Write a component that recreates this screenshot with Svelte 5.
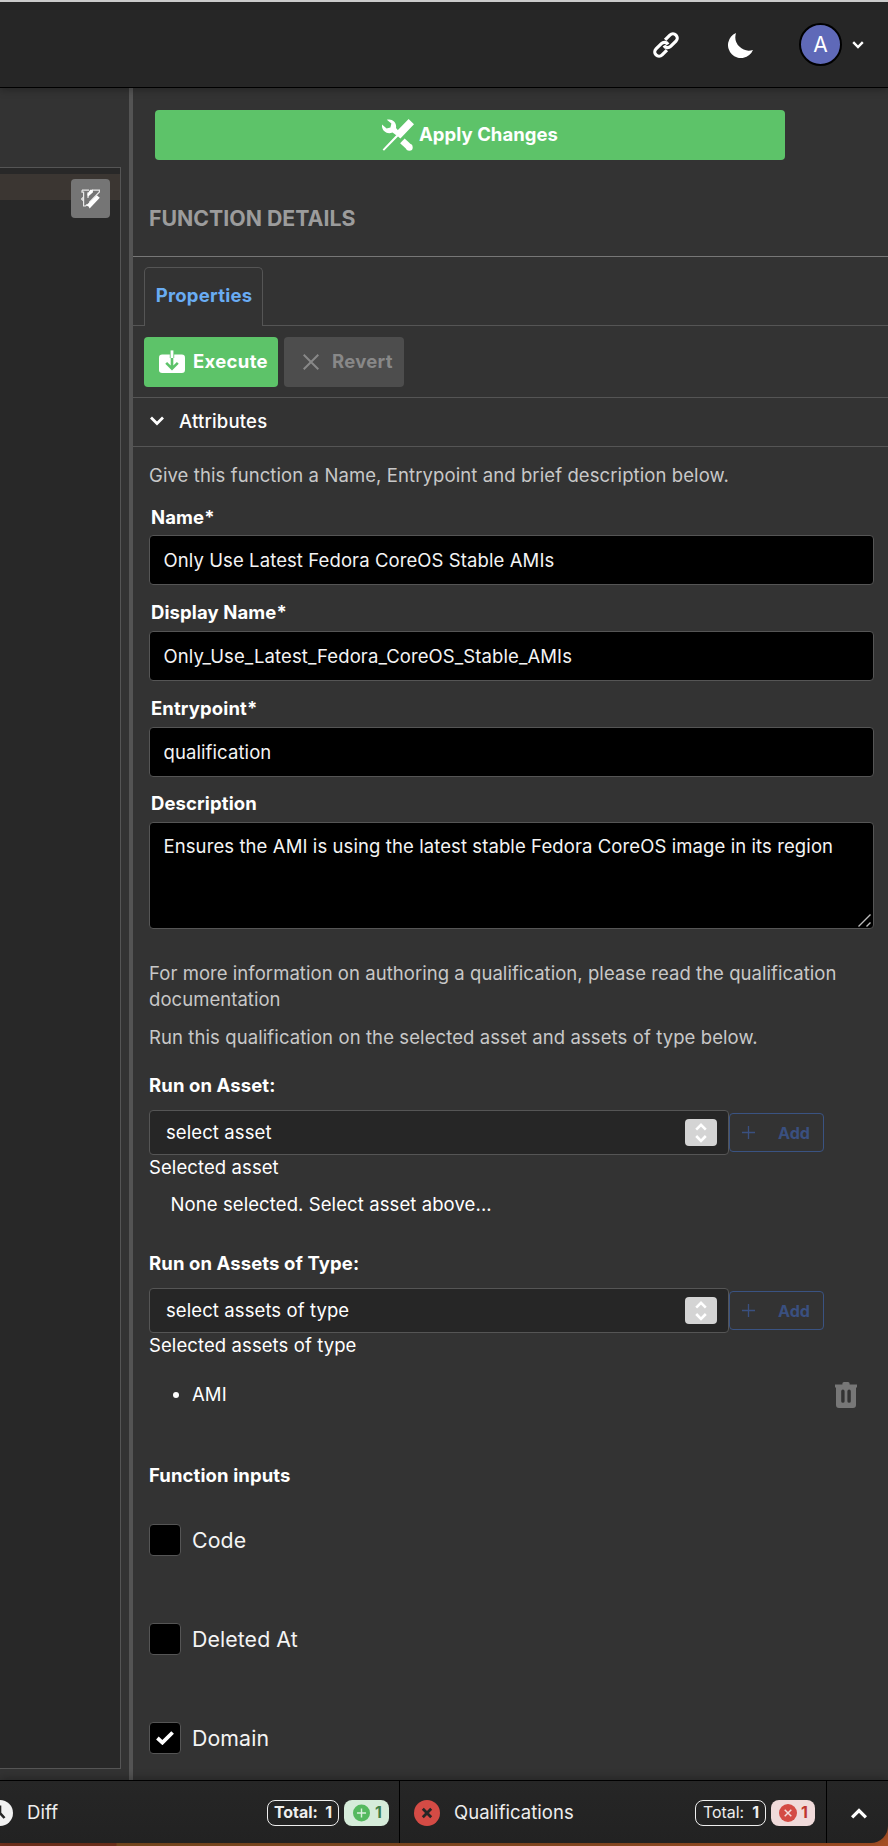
<script>
  const fields = [
    { label: 'Name*', value: 'Only Use Latest Fedora CoreOS Stable AMIs' },
    { label: 'Display Name*', value: 'Only_Use_Latest_Fedora_CoreOS_Stable_AMIs' },
    { label: 'Entrypoint*', value: 'qualification' }
  ];
  const description = 'Ensures the AMI is using the latest stable Fedora CoreOS image in its region';
  const inputs = [
    { label: 'Code', checked: false },
    { label: 'Deleted At', checked: false },
    { label: 'Domain', checked: true }
  ];
</script>

{#snippet picker(placeholder)}
  <div class="picker">
    <div class="select">
      <span>{placeholder}</span>
      <span class="stepper">
        <svg width="32" height="27" viewBox="0 0 32 27" fill="none" stroke="#fff" stroke-width="2.6"><path d="M11.2 10.6 16 5.8l4.8 4.8M11.2 17 16 21.8l4.8-4.8" /></svg>
      </span>
    </div>
    <button class="add">
      <svg width="13" height="13" viewBox="0 0 13 13" stroke="currentColor" stroke-width="1.3"><path d="M6.5 0v13M0 6.5h13" /></svg>
      Add
    </button>
  </div>
{/snippet}

<div class="app">
  <header>
    <svg class="link" width="26" height="26" viewBox="0 0 26 26" fill="none" stroke="#fff" stroke-width="3.2">
      <g transform="translate(13 13) rotate(-45)">
        <path d="M3 -4.3H9.8A4.3 4.3 0 0 1 9.8 4.3H2.2A4.3 4.3 0 0 1 -1.9 -1" />
        <path d="M-3 4.3H-9.8A4.3 4.3 0 0 1 -9.8 -4.3H-2.2A4.3 4.3 0 0 1 1.9 1" />
      </g>
    </svg>
    <svg class="moon" width="25" height="25" viewBox="0 0 25 25" fill="#fff"><path d="M8 0A13.6 13.6 0 0 0 25 17A13 13 0 1 1 8 0Z" /></svg>
    <span class="avatar">A</span>
    <svg width="12" height="8" viewBox="0 0 12 8" fill="none" stroke="#fff" stroke-width="2.4"><path d="M1.2 1.2 6 6l4.8-4.8" /></svg>
  </header>

  <main>
    <section class="left">
      <div class="editor">
        <div class="active-line"></div>
        <button class="vim" aria-label="Vim mode">
          <svg width="19" height="20" viewBox="0 0 19 20">
            <path d="M1 1.2H8M1 1.2V3.2H2.6V17H4.6L6 15.4M11 1.2H18.4V3L8.2 13.4M7 3.2V9M2.4 8.2.6 10l1.8 1.8" fill="none" stroke="#e8e8e8" stroke-width="1.2" />
            <path d="M9.2.8 11.8.8 12 3.2 7 7.8 6.4 5Z" fill="#fff" />
            <path d="M15.8 6.2 18.8 8.8 8.6 19.4 7.6 17.6 5 16.4Z" fill="#fff" />
          </svg>
        </button>
      </div>
    </section>

    <section class="panel">
      <button class="apply">
        <svg width="32" height="32" viewBox="0 0 32 32" fill="#fff">
          <path d="M4.8 .8C10-.8 15 3.2 14 9L17 12.5 14 16 10.5 13.5C5 16-.8 11.8 0 5.6L4.6 9.4 8.4 8.4 9.4 4.6Z" />
          <path d="M26.6 0 32 5.2 18.4 19.6 16 17.6 2 31.8.6 30.6 14.4 16 12.8 14.2Z" />
          <path d="M20.4 21.8 27.4 28.4" stroke="#fff" stroke-width="6.6" /><circle cx="27.4" cy="28.4" r="3.3" />
        </svg>
        <span>Apply Changes</span>
      </button>
      <h1>FUNCTION DETAILS</h1>
      <div class="tabs"><span class="tab">Properties</span></div>
      <div class="actions">
        <button class="execute">
          <svg width="26" height="24" viewBox="0 0 26 24">
            <rect y="4.6" width="26" height="18.4" rx="3.2" fill="#fff" />
            <path d="M13 3V18M7.2 12.8 13 18.6l5.8-5.8" fill="none" stroke="#5dc369" stroke-width="2.6" />
            <path d="M10.8 3.5h4.4V8h-4.4z" fill="#5dc369" />
            <path d="M11.6.4h2.8V8h-2.8z" fill="#fff" />
          </svg>
          <span>Execute</span>
        </button>
        <button class="revert">
          <svg width="16" height="16" viewBox="0 0 16 16" stroke="currentColor" stroke-width="2"><path d="M.7.7 15.3 15.3M15.3.7.7 15.3" /></svg>
          <span>Revert</span>
        </button>
      </div>
      <div class="accordion">
        <svg width="14" height="10" viewBox="0 0 14 10" fill="none" stroke="#fff" stroke-width="2.8"><path d="M1 1.6 7 7.6l6-6" /></svg>
        Attributes
      </div>

      <div class="form">
        <p class="muted">Give this function a Name, Entrypoint and brief description below.</p>
        <div class="fields">
          {#each fields as f}
            <label><span>{f.label}</span><input value={f.value} /></label>
          {/each}
          <label class="area">
            <span>Description</span>
            <textarea value={description}></textarea>
            <svg class="grip" width="13" height="13" viewBox="0 0 13 13" stroke="#bdbdbd" stroke-width="1.4"><path d="M.5 12.5 12.5.5M8.5 12.5l4-4" /></svg>
          </label>
        </div>

        <p class="muted docs">For more information on authoring a qualification, please read the qualification documentation</p>
        <p class="muted run">Run this qualification on the selected asset and assets of type below.</p>

        <h2 class="asset-title">Run on Asset:</h2>
        {@render picker('select asset')}
        <p class="caption">Selected asset</p>
        <p class="none">None selected. Select asset above...</p>

        <h2 class="type-title">Run on Assets of Type:</h2>
        {@render picker('select assets of type')}
        <p class="caption">Selected assets of type</p>
        <div class="item">
          <span class="dot"></span>
          <span>AMI</span>
          <svg width="22" height="26" viewBox="0 0 22 26"><path fill="#777" fill-rule="evenodd" d="M7.4 2.6V1.6Q7.4 0 9 0h4q1.6 0 1.6 1.6v1H22v3h-1V23q0 3-3 3H4q-3 0-3-3V5.6H0v-3ZM6.2 9.2v10q0 1.6 1.7 1.6t1.7-1.6v-10q0-1.6-1.7-1.6T6.2 9.2Zm6.2 0v10q0 1.6 1.7 1.6t1.7-1.6v-10q0-1.6-1.7-1.6t-1.7 1.6Z" /></svg>
        </div>

        <h2 class="inputs-title">Function inputs</h2>
        <div class="checks">
          {#each inputs as i}
            <div class="check">
              <span class="box">
                {#if i.checked}<svg width="18" height="14" viewBox="0 0 18 14" fill="none" stroke="#fff" stroke-width="3.8"><path d="M1.4 7 6.4 11.6 16.6 1.5" /></svg>{/if}
              </span>
              {i.label}
            </div>
          {/each}
        </div>
      </div>
    </section>
  </main>

  <footer>
    <div class="cell diff">
      <svg class="clock" width="26" height="26" viewBox="0 0 26 26"><circle cx="13" cy="13" r="13" fill="#f2f2f2" /><path d="M13 5.5V13l4.5 5" fill="none" stroke="#262626" stroke-width="2.6" /></svg>
      <span class="name">Diff</span>
      <span class="pill total"><b>Total:</b><b>1</b></span>
      <span class="pill green">
        <svg width="17" height="18" viewBox="0 0 18 18"><circle cx="9" cy="9" r="9" fill="#55b95f" /><path d="M9 4.2v9.6M4.2 9h9.6" stroke="#d9efdc" stroke-width="1.5" /></svg>
        <b>1</b>
      </span>
    </div>
    <div class="cell quals">
      <svg width="26" height="26" viewBox="0 0 26 26"><circle cx="13" cy="13" r="13" fill="#d44b45" /><path d="m8.8 8.8 8.4 8.4m0-8.4-8.4 8.4" stroke="#262626" stroke-width="2.8" /></svg>
      <span class="name">Qualifications</span>
      <span class="pill total"><span>Total:</span><b>1</b></span>
      <span class="pill red">
        <svg width="18" height="18" viewBox="0 0 18 18"><circle cx="9" cy="9" r="9" fill="#d44b45" /><path d="m5.7 5.7 6.6 6.6m0-6.6-6.6 6.6" stroke="#f3dcdc" stroke-width="1.5" /></svg>
        <b>1</b>
      </span>
    </div>
    <div class="cell up">
      <svg width="16" height="11" viewBox="0 0 16 11" fill="none" stroke="#fff" stroke-width="3.2"><path d="M1.1 9.4 8 2.5l6.9 6.9" /></svg>
    </div>
  </footer>
</div>

<style>
  :global(body) { background: #333; }
  * { box-sizing: border-box; }
  .app {
    width: 888px; height: 1846px; padding-bottom: 3px; overflow: hidden;
    display: flex; flex-direction: column;
    background: linear-gradient(90deg, #70301c 0 116px, #79491f 117px, #8a4a22 600px, #a64f24);
    color: #fff; font: 400 18.5px/26px Inter, sans-serif; letter-spacing: 0.095px;
  }
  p, h1, h2 { margin: 0; }
  button { border: 0; padding: 0; font: inherit; letter-spacing: inherit; color: #fff; display: flex; align-items: center; }
  svg { flex: none; display: block; }

  header {
    flex: none; height: 88px; border-top: 2px solid #cbcbcb; border-bottom: 1px solid #000; background: #262626;
    display: flex; align-items: center; justify-content: flex-end; padding-right: 24px;
    position: relative; box-shadow: 0 2px 8px rgba(0, 0, 0, 0.28);
  }
  .link { margin-right: 49px; }
  .moon { margin: 2px 46px 0 0; }
  .avatar {
    width: 43px; height: 43px; margin-right: 10px; border: 2px solid #000; border-radius: 50%; background: #5f69b8;
    display: flex; align-items: center; justify-content: center; font-size: 21px; letter-spacing: 0;
  }

  main { flex: 1; min-height: 0; display: flex; background: #333; }
  .left { width: 129px; padding: 79px 8px 11px 0; }
  .editor { height: 100%; border: 1px solid #555; border-left: 0; background: #282828; padding-top: 6px; display: flex; flex-direction: column; }
  .active-line { height: 26px; background: #3b3632; }
  .vim { margin: -21px 10px 0 auto; width: 39px; height: 39px; border-radius: 4px; background: #757575; justify-content: center; }
  .panel { flex: 1; border-left: 4px solid #545454; }

  .apply {
    margin: 22px 0 0 22px; width: 630px; height: 50px; border-radius: 4px; background: #5dc369;
    justify-content: center; gap: 5px; font-weight: 700; letter-spacing: 0.05px;
  }
  button span { margin-bottom: 2px; }
  h1 {
    height: 97px; padding: 45px 0 0 16px; border-bottom: 1px solid #777;
    font-size: 21.3px; font-weight: 700; letter-spacing: 0; line-height: 26px; color: #9c9c9c;
  }
  .tabs { height: 69px; padding: 10px 0 0 11px; border-bottom: 1px solid #555; display: flex; }
  .tab {
    height: 59px; width: 119px; border: 1px solid #555; border-bottom: 0; border-radius: 5px 5px 0 0; background: #333;
    display: flex; align-items: center; justify-content: center; padding: 0 0 4px 1px; color: #69acf3; font-weight: 700; letter-spacing: 0.24px;
  }
  .actions { display: flex; gap: 6px; padding: 11px 0 10px 11px; }
  .execute, .revert { height: 50px; border-radius: 4px; font-weight: 700; }
  .execute { width: 134px; background: #5dc369; padding-left: 15px; gap: 8px; letter-spacing: 0.33px; }
  .revert { width: 120px; background: #4d4d4d; color: #888; padding-left: 19px; gap: 13px; letter-spacing: 0.28px; }
  .accordion {
    height: 50px; border: solid #555; border-width: 1px 0; padding: 0 0 2px 17px; display: flex; align-items: center; gap: 15px;
    font-weight: 500; letter-spacing: 0.2px;
  }

  .form { padding: 15px 14px 0 16px; }
  .muted { color: #c8c8c8; }
  .fields { margin-top: 16px; display: flex; flex-direction: column; gap: 14px; }
  label { display: flex; flex-direction: column; gap: 6px; }
  label:first-child { gap: 5px; }
  label span { font-weight: 700; padding-left: 2px; letter-spacing: 0.11px; }
  input, textarea {
    display: block; width: 725px; height: 50px; margin: 0; border: 1px solid #555; border-radius: 4px; outline: 0;
    background: #000; color: #f4f4f4; font: inherit; letter-spacing: inherit; padding: 0 13.5px;
  }
  textarea { height: 107px; padding: 10px 13.5px; resize: none; overflow: hidden; }
  .area { position: relative; margin-top: -1px; }
  .grip { position: absolute; right: 3px; bottom: 2px; }
  .docs { margin-top: 31px; letter-spacing: 0.05px; }
  .run { margin-top: 12px; }
  h2 { font-size: inherit; font-weight: 700; letter-spacing: 0.11px; }
  .asset-title { margin: 22px 0 12px; }
  .type-title { margin: 33px 0 12px; }
  .picker { display: flex; align-items: center; }
  .select {
    width: 580px; height: 45px; border: 1px solid #555; border-radius: 4px; background: #262626;
    display: flex; align-items: center; justify-content: space-between; padding: 0 11px 1px 16px;
  }
  .stepper { width: 32px; height: 27px; border-radius: 4px; background: #d4d4d4; margin-top: 1px; }
  .add {
    width: 95px; height: 39px; border: 1px solid #3a5382; border-radius: 4px; background: none; color: #3a5080;
    padding-left: 12px; gap: 23px; font-size: 16.1px; font-weight: 700; letter-spacing: 0;
  }
  .caption { margin-top: -1px; }
  .none { padding: 11px 0 0 21.5px; }
  .item { margin-top: 23px; display: flex; align-items: center; height: 26px; }
  .dot { width: 6px; height: 6px; margin: 2px 13px 0 24px; border-radius: 50%; background: #fff; }
  .item svg { margin: 2px 17px 0 auto; }
  .inputs-title { margin-top: 55px; }
  .checks { margin-top: 36px; display: flex; flex-direction: column; gap: 67px; }
  .check { display: flex; align-items: center; gap: 11px; height: 32px; font-size: 21.3px; letter-spacing: 0.1px; color: #f4f4f4; }
  .box { width: 32px; height: 32px; border: 1px solid #555; border-radius: 4px; background: #000; display: flex; align-items: center; justify-content: center; }

  footer {
    flex: none; height: 63px; display: flex; border-top: 1px solid #000; position: relative;
    background: linear-gradient(#262626, #222); border-bottom-right-radius: 17px; box-shadow: 0 -2px 8px rgba(0, 0, 0, 0.28); color: #eee;
  }
  .cell { display: flex; align-items: center; border-right: 1px solid #000; padding-top: 2px; }
  .name { margin: 0 auto 2px 0; }
  .diff { width: 400px; padding-right: 10px; }
  .clock { margin: 0 14px 0 -13px; }
  .quals { width: 427px; padding: 2px 11px 0 14px; letter-spacing: 0.04px; }
  .quals > svg { margin-right: 14px; }
  .up { flex: 1; justify-content: center; border: 0; padding-left: 3px; }
  .pill { height: 26px; border-radius: 8px; display: flex; align-items: center; font-size: 15.9px; letter-spacing: 0; line-height: 24px; }
  .pill b { font-weight: 700; }
  .total { width: 72px; border: 1px solid #eee; padding: 0 6px; justify-content: space-between; margin-right: 5px; }
  .quals .total { width: 71px; padding-left: 7px; }
  .green { width: 45px; background: #d6ecda; color: #3f7f48; padding-left: 9px; gap: 5px; }
  .red { width: 44px; background: #f0dada; color: #bf3530; padding-left: 8px; gap: 4px; }
</style>
